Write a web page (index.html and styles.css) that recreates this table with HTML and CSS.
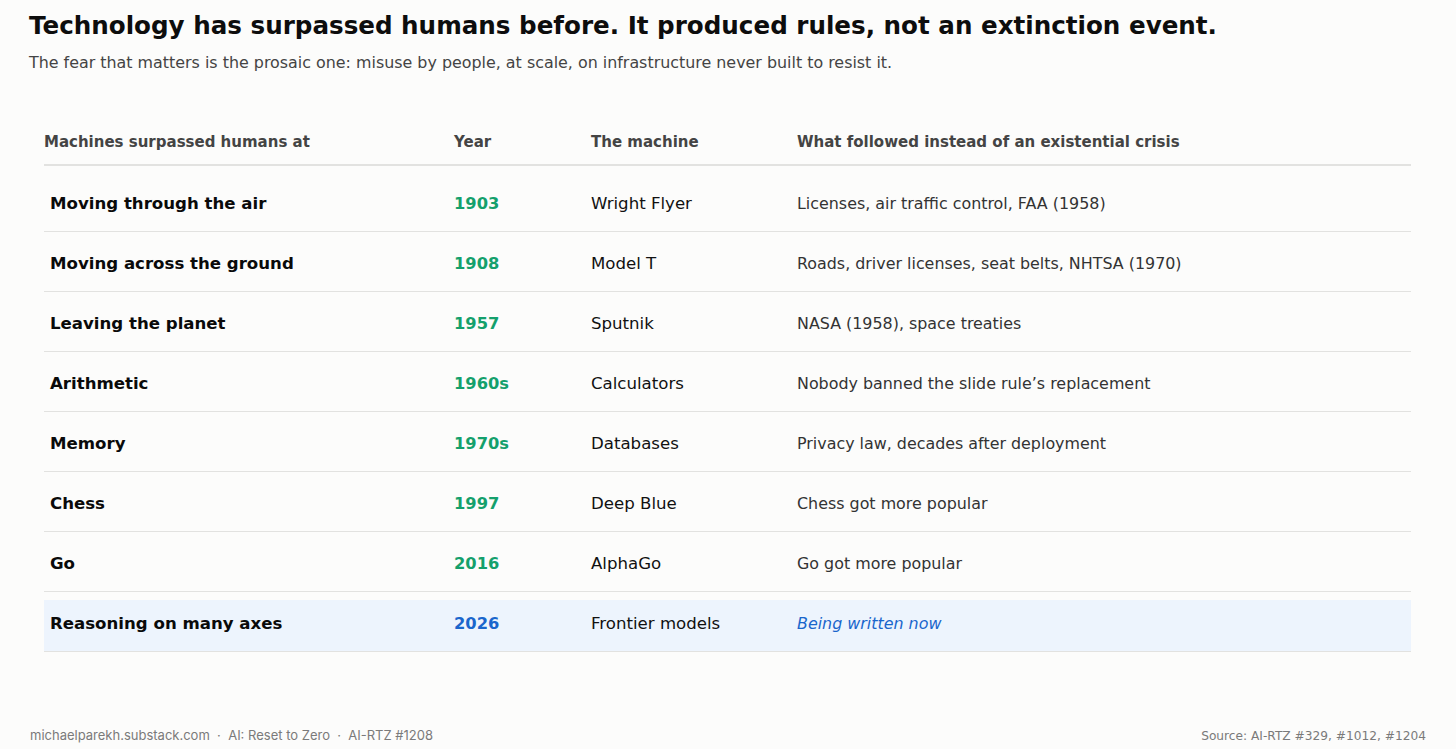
FILE: index.html
```html
<!DOCTYPE html>
<html>
<head>
<meta charset="utf-8">
<link rel="stylesheet" href="styles.css">
</head>
<body>
<div class="page">
  <header class="head">
    <h1 class="title">Technology has surpassed humans before. It produced rules, not an extinction event.</h1>
    <p class="subtitle">The fear that matters is the prosaic one: misuse by people, at scale, on infrastructure never built to resist it.</p>
  </header>
  <div class="table">
    <div class="thead">
      <div class="c1">Machines surpassed humans at</div>
      <div class="c2">Year</div>
      <div class="c3">The machine</div>
      <div class="c4">What followed instead of an existential crisis</div>
    </div>
    <div class="row"><div class="c1 lbl">Moving through the air</div><div class="c2 yr">1903</div><div class="c3">Wright Flyer</div><div class="c4 note">Licenses, air traffic control, FAA (1958)</div></div>
    <div class="row"><div class="c1 lbl">Moving across the ground</div><div class="c2 yr">1908</div><div class="c3">Model T</div><div class="c4 note">Roads, driver licenses, seat belts, NHTSA (1970)</div></div>
    <div class="row"><div class="c1 lbl">Leaving the planet</div><div class="c2 yr">1957</div><div class="c3">Sputnik</div><div class="c4 note">NASA (1958), space treaties</div></div>
    <div class="row"><div class="c1 lbl">Arithmetic</div><div class="c2 yr">1960s</div><div class="c3">Calculators</div><div class="c4 note">Nobody banned the slide rule’s replacement</div></div>
    <div class="row"><div class="c1 lbl">Memory</div><div class="c2 yr">1970s</div><div class="c3">Databases</div><div class="c4 note">Privacy law, decades after deployment</div></div>
    <div class="row"><div class="c1 lbl">Chess</div><div class="c2 yr">1997</div><div class="c3">Deep Blue</div><div class="c4 note">Chess got more popular</div></div>
    <div class="row"><div class="c1 lbl">Go</div><div class="c2 yr">2016</div><div class="c3">AlphaGo</div><div class="c4 note">Go got more popular</div></div>
    <div class="row hl"><div class="c1 lbl">Reasoning on many axes</div><div class="c2 yr">2026</div><div class="c3">Frontier models</div><div class="c4 note">Being written now</div></div>
  </div>
  <footer class="foot">
    <span class="foot-left">michaelparekh.substack.com &nbsp;·&nbsp; AI: Reset to Zero &nbsp;·&nbsp; AI-RTZ #1208</span>
    <span class="foot-right">Source: AI-RTZ #329, #1012, #1204</span>
  </footer>
</div>
</body>
</html>
```
FILE: styles.css
```css
* { box-sizing: border-box; }
html, body { margin: 0; padding: 0; }
body {
  background: #fcfcfb;
  font-family: "DejaVu Sans", sans-serif;
  color: #111;
  width: 1456px;
  height: 749px;
  overflow: hidden;
}
.page {
  height: 749px;
  display: flex;
  flex-direction: column;
  padding: 0 30px 0 29px;
}
.head { padding-top: 11px; }
.title {
  margin: 0;
  font-size: 24.6px;
  font-weight: bold;
  line-height: 30px;
  color: #0d0d0d;
}
.subtitle {
  margin: 12px 0 0 0;
  font-size: 15.9px;
  line-height: 20px;
  color: #444;
}
.table {
  margin: 49px 15px 0 15px;
  display: flex;
  flex-direction: column;
}
.thead, .row {
  display: grid;
  grid-template-columns: 410px 137px 206px 1fr;
  align-items: center;
}
.thead {
  height: 44px;
  border-bottom: 2px solid #e2e2e0;
  font-size: 15px;
  font-weight: bold;
  color: #444;
  padding-bottom: 2px;
}
.row {
  height: 52px;
  border-bottom: 1px solid #e2e2e0;
  font-size: 16.6px;
  color: #111;
  margin-top: 8px;
  padding-bottom: 4px;
}
.thead + .row { margin-top: 14px; }
.row .c1 { padding-left: 6px; }
.lbl { font-weight: bold; color: #0a0a0a; }
.yr { font-weight: bold; color: #14a06c; font-size: 16.3px; }
.note { font-size: 15.9px; color: #333; }
.hl { background: #edf4fd; }
.hl .yr { color: #1a66cc; }
.hl .note { color: #1a66cc; font-style: italic; }
.foot {
  margin-top: auto;
  display: flex;
  justify-content: space-between;
  align-items: baseline;
  padding: 0 0 6px 1px;
  font-size: 13px;
  color: #7a7a7a;
}
.foot-left { font-family: Inter, "DejaVu Sans", sans-serif; }
.foot-right { font-size: 12.2px; }
```
